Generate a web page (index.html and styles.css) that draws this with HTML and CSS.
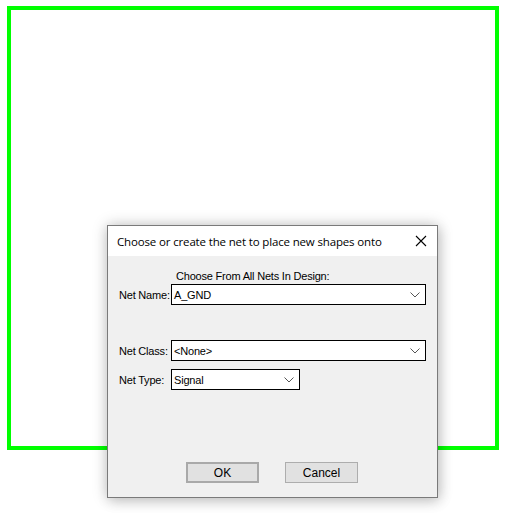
FILE: index.html
```html
<!DOCTYPE html>
<html>
<head>
<meta charset="utf-8">
<link rel="stylesheet" href="styles.css">
</head>
<body>
<div class="canvas">
  <div class="region"></div>
  <div class="dialog">
    <div class="titlebar">
      <span class="title">Choose or create the net to place new shapes onto</span>
      <svg class="close" width="12" height="12" viewBox="0 0 12 12"><path d="M1 1L11 11M11 1L1 11" stroke="#000" stroke-width="1.1" fill="none"/></svg>
    </div>
    <div class="body">
      <div class="hint">Choose From All Nets In Design:</div>
      <div class="row">
        <span class="label">Net Name:</span>
        <div class="combo wide"><span>A_GND</span><svg class="chev" width="10" height="6" viewBox="0 0 10 6"><path d="M0.5 0.5L5 5L9.5 0.5" stroke="#555" stroke-width="1" fill="none"/></svg></div>
      </div>
      <div class="row r2">
        <span class="label">Net Class:</span>
        <div class="combo wide"><span>&lt;None&gt;</span><svg class="chev" width="10" height="6" viewBox="0 0 10 6"><path d="M0.5 0.5L5 5L9.5 0.5" stroke="#555" stroke-width="1" fill="none"/></svg></div>
      </div>
      <div class="row r3">
        <span class="label">Net Type:</span>
        <div class="combo narrow"><span>Signal</span><svg class="chev" width="10" height="6" viewBox="0 0 10 6"><path d="M0.5 0.5L5 5L9.5 0.5" stroke="#555" stroke-width="1" fill="none"/></svg></div>
      </div>
      <div class="buttons">
        <div class="btn default">OK</div>
        <div class="btn">Cancel</div>
      </div>
    </div>
  </div>
</div>
</body>
</html>
```
FILE: styles.css
```css
html, body {
  margin: 0;
  padding: 0;
  background: #fff;
}
body {
  font-family: "Liberation Sans", Arial, sans-serif;
  font-size: 11px;
  color: #000;
}
.canvas {
  position: relative;
  width: 510px;
  height: 520px;
  padding: 6px 0 0 7px;
  box-sizing: border-box;
}
.region {
  width: 492px;
  height: 444px;
  border: 4px solid #00ff00;
  box-sizing: border-box;
}
.dialog {
  position: absolute;
  left: 107px;
  top: 225px;
  width: 331px;
  height: 273px;
  box-sizing: border-box;
  border: 1px solid #7a7a7a;
  background: #f0f0f0;
  box-shadow: 0 0 14px rgba(0,0,0,0.22), 2px 4px 12px rgba(0,0,0,0.12);
  display: flex;
  flex-direction: column;
}
.titlebar {
  height: 30px;
  background: #fff;
  display: flex;
  align-items: center;
  padding: 0 9px 0 9px;
  flex-shrink: 0;
}
.title {
  flex: 1;
  font-family: "Open Sans", "Noto Sans", sans-serif;
  font-size: 11.5px;
  letter-spacing: -0.15px;
  color: #000;
  padding-top: 1px;
}
.close {
  margin-right: 1px;
}
.body {
  flex: 1;
  padding: 12px 10px 0 11px;
  display: flex;
  flex-direction: column;
  letter-spacing: -0.2px;
}
.hint {
  margin-left: 57px;
  height: 16px;
  line-height: 16px;
}
.row {
  display: flex;
  align-items: center;
}
.r2 { margin-top: 35px; }
.r3 { margin-top: 8px; }
.label {
  width: 52px;
  flex-shrink: 0;
  white-space: nowrap;
}
.combo {
  height: 21px;
  box-sizing: border-box;
  border: 1px solid #000;
  background: #fff;
  display: flex;
  align-items: center;
  padding: 0 5px 0 2px;
}
.combo span { flex: 1; }
.wide { width: 255px; }
.narrow { width: 129px; }
.buttons {
  margin-top: 72px;
  display: flex;
  gap: 26px;
  padding-left: 67px;
}
.btn {
  width: 73px;
  height: 21px;
  box-sizing: border-box;
  border: 1px solid #adadad;
  background: #e1e1e1;
  display: flex;
  align-items: center;
  justify-content: center;
  font-size: 12px;
  letter-spacing: 0;
  font-family: "Liberation Sans", Arial, sans-serif;
}
.btn.default {
  border: 2px solid #a9a9a9;
}
```
